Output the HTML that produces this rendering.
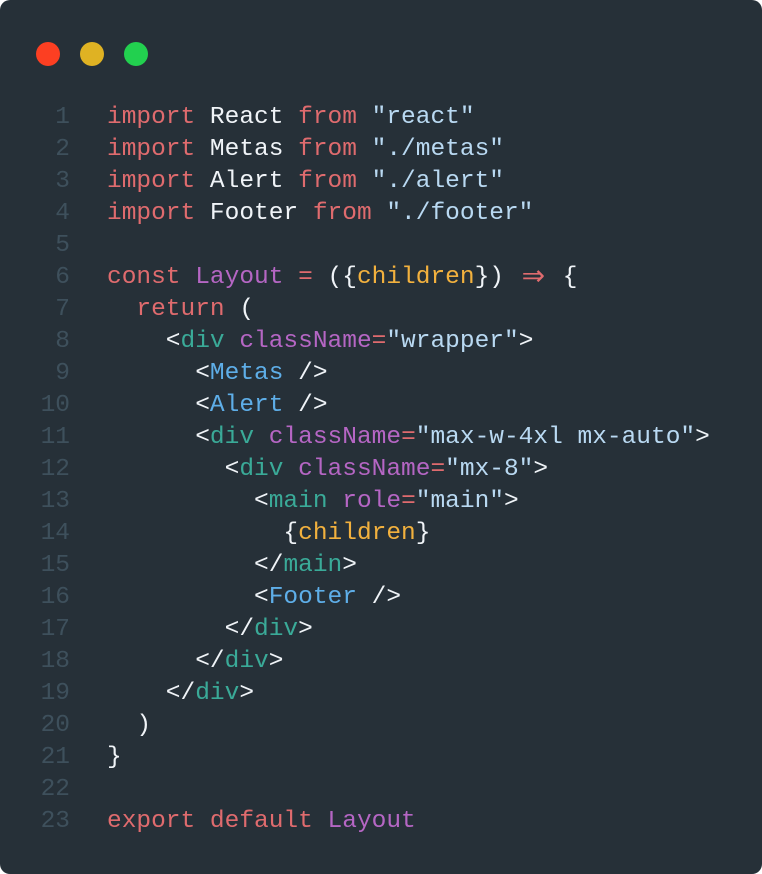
<!DOCTYPE html>
<html><head><meta charset="utf-8"><style>
html,body{margin:0;padding:0;background:#fff;width:762px;height:874px;overflow:hidden}
.card{position:absolute;left:0;top:0;width:762px;height:874px;background:#263038;border-radius:10px}
.dot{position:absolute;top:42px;width:24px;height:24px;border-radius:50%}
pre{position:absolute;left:0;top:102px;margin:0;font-family:"Liberation Mono","DejaVu Sans Mono",monospace;font-size:24.5px;line-height:32px;color:#f0f4f8}
.ln{display:inline-block;width:70px;text-align:right;color:#3e505c;margin-right:37px}
.k{color:#df6b6e}.p{color:#b566c4}.y{color:#f2b13e}.t{color:#3aaa98}.b{color:#5eaee8}.s{color:#b9d9f2}.w{color:#f0f4f8}
.ar{display:inline-block;width:29.4px;text-align:center;color:#df6b6e;font-family:"DejaVu Sans",sans-serif;font-size:28px;line-height:20px;vertical-align:top;margin-top:4px;overflow:visible}
</style></head><body>
<div class="card">
<div class="dot" style="left:36px;background:#fc3f22"></div>
<div class="dot" style="left:80px;background:#dfb223"></div>
<div class="dot" style="left:124px;background:#22d04f"></div>
<pre><span class="ln">1</span><span class="k">import</span> React <span class="k">from</span> <span class="s">"react"</span>
<span class="ln">2</span><span class="k">import</span> Metas <span class="k">from</span> <span class="s">"./metas"</span>
<span class="ln">3</span><span class="k">import</span> Alert <span class="k">from</span> <span class="s">"./alert"</span>
<span class="ln">4</span><span class="k">import</span> Footer <span class="k">from</span> <span class="s">"./footer"</span>
<span class="ln">5</span>
<span class="ln">6</span><span class="k">const</span> <span class="p">Layout</span> <span class="k">=</span> ({<span class="y">children</span>}) <span class="ar">⇒</span> {
<span class="ln">7</span>  <span class="k">return</span> (
<span class="ln">8</span>    &lt;<span class="t">div</span> <span class="p">className</span><span class="k">=</span><span class="s">"wrapper"</span>&gt;
<span class="ln">9</span>      &lt;<span class="b">Metas</span> /&gt;
<span class="ln">10</span>      &lt;<span class="b">Alert</span> /&gt;
<span class="ln">11</span>      &lt;<span class="t">div</span> <span class="p">className</span><span class="k">=</span><span class="s">"max-w-4xl mx-auto"</span>&gt;
<span class="ln">12</span>        &lt;<span class="t">div</span> <span class="p">className</span><span class="k">=</span><span class="s">"mx-8"</span>&gt;
<span class="ln">13</span>          &lt;<span class="t">main</span> <span class="p">role</span><span class="k">=</span><span class="s">"main"</span>&gt;
<span class="ln">14</span>            {<span class="y">children</span>}
<span class="ln">15</span>          &lt;/<span class="t">main</span>&gt;
<span class="ln">16</span>          &lt;<span class="b">Footer</span> /&gt;
<span class="ln">17</span>        &lt;/<span class="t">div</span>&gt;
<span class="ln">18</span>      &lt;/<span class="t">div</span>&gt;
<span class="ln">19</span>    &lt;/<span class="t">div</span>&gt;
<span class="ln">20</span>  )
<span class="ln">21</span>}
<span class="ln">22</span>
<span class="ln">23</span><span class="k">export</span> <span class="k">default</span> <span class="p">Layout</span></pre>
</div>
</body></html>
